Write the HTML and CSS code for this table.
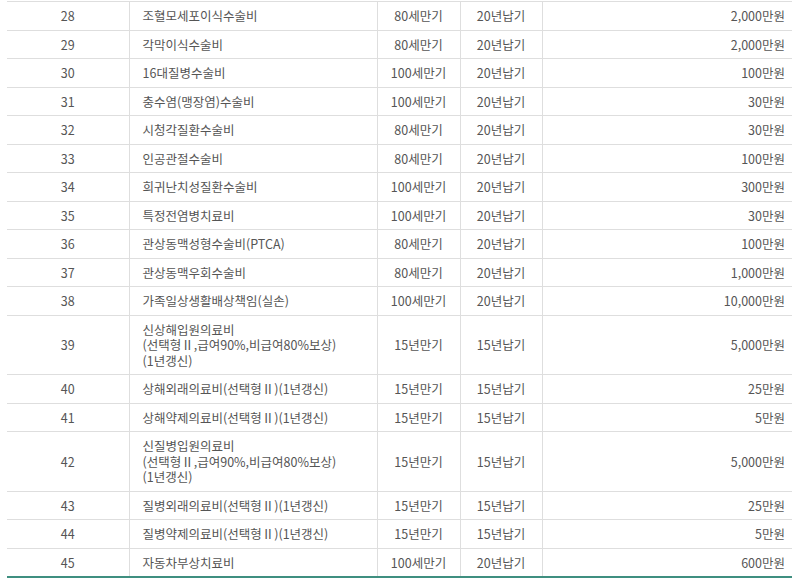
FILE: index.html
```html
<!DOCTYPE html>
<html lang="ko">
<head>
<meta charset="utf-8">
<link rel="stylesheet" href="styles.css">
</head>
<body>
<table class="tbl">
  <colgroup>
    <col class="c-no"><col class="c-name"><col class="c-term"><col class="c-pay"><col class="c-amt">
  </colgroup>
  <tbody>
    <tr><td class="no">28</td><td class="name">조혈모세포이식수술비</td><td class="ctr">80세만기</td><td class="ctr">20년납기</td><td class="amt">2,000만원</td></tr>
    <tr><td class="no">29</td><td class="name">각막이식수술비</td><td class="ctr">80세만기</td><td class="ctr">20년납기</td><td class="amt">2,000만원</td></tr>
    <tr><td class="no">30</td><td class="name">16대질병수술비</td><td class="ctr">100세만기</td><td class="ctr">20년납기</td><td class="amt">100만원</td></tr>
    <tr><td class="no">31</td><td class="name">충수염(맹장염)수술비</td><td class="ctr">100세만기</td><td class="ctr">20년납기</td><td class="amt">30만원</td></tr>
    <tr><td class="no">32</td><td class="name">시청각질환수술비</td><td class="ctr">80세만기</td><td class="ctr">20년납기</td><td class="amt">30만원</td></tr>
    <tr><td class="no">33</td><td class="name">인공관절수술비</td><td class="ctr">80세만기</td><td class="ctr">20년납기</td><td class="amt">100만원</td></tr>
    <tr><td class="no">34</td><td class="name">희귀난치성질환수술비</td><td class="ctr">100세만기</td><td class="ctr">20년납기</td><td class="amt">300만원</td></tr>
    <tr><td class="no">35</td><td class="name">특정전염병치료비</td><td class="ctr">100세만기</td><td class="ctr">20년납기</td><td class="amt">30만원</td></tr>
    <tr><td class="no">36</td><td class="name">관상동맥성형수술비(PTCA)</td><td class="ctr">80세만기</td><td class="ctr">20년납기</td><td class="amt">100만원</td></tr>
    <tr><td class="no">37</td><td class="name">관상동맥우회수술비</td><td class="ctr">80세만기</td><td class="ctr">20년납기</td><td class="amt">1,000만원</td></tr>
    <tr><td class="no">38</td><td class="name">가족일상생활배상책임(실손)</td><td class="ctr">100세만기</td><td class="ctr">20년납기</td><td class="amt">10,000만원</td></tr>
    <tr><td class="no">39</td><td class="name">신상해입원의료비<br>(선택형Ⅱ,급여90%,비급여80%보상)<br>(1년갱신)</td><td class="ctr">15년만기</td><td class="ctr">15년납기</td><td class="amt">5,000만원</td></tr>
    <tr><td class="no">40</td><td class="name">상해외래의료비(선택형Ⅱ)(1년갱신)</td><td class="ctr">15년만기</td><td class="ctr">15년납기</td><td class="amt">25만원</td></tr>
    <tr><td class="no">41</td><td class="name">상해약제의료비(선택형Ⅱ)(1년갱신)</td><td class="ctr">15년만기</td><td class="ctr">15년납기</td><td class="amt">5만원</td></tr>
    <tr><td class="no">42</td><td class="name">신질병입원의료비<br>(선택형Ⅱ,급여90%,비급여80%보상)<br>(1년갱신)</td><td class="ctr">15년만기</td><td class="ctr">15년납기</td><td class="amt">5,000만원</td></tr>
    <tr><td class="no">43</td><td class="name">질병외래의료비(선택형Ⅱ)(1년갱신)</td><td class="ctr">15년만기</td><td class="ctr">15년납기</td><td class="amt">25만원</td></tr>
    <tr><td class="no">44</td><td class="name">질병약제의료비(선택형Ⅱ)(1년갱신)</td><td class="ctr">15년만기</td><td class="ctr">15년납기</td><td class="amt">5만원</td></tr>
    <tr class="last"><td class="no">45</td><td class="name">자동차부상치료비</td><td class="ctr">100세만기</td><td class="ctr">20년납기</td><td class="amt">600만원</td></tr>
  </tbody>
</table>
</body>
</html>
```

FILE: styles.css
```css
html, body {
  margin: 0;
  padding: 0;
  background: #fff;
}
body {
  padding: 1px 8px 0 7px;
  font-family: "Noto Sans CJK KR", "Noto Sans", sans-serif;
  font-size: 12.5px;
  color: #555;
}
.tbl {
  width: 785px;
  border-collapse: collapse;
  table-layout: fixed;
  border-top: 1px solid #dedede;
  border-bottom: 2px solid #3f8f80;
}
.c-no { width: 122px; }
.c-name { width: 248px; }
.c-term { width: 83px; }
.c-pay { width: 82px; }
.c-amt { width: 250px; }
.tbl td {
  padding: 6px 0 6px;
  line-height: 15.5px;
  border-bottom: 1px solid #dedede;
  border-left: 1px solid #dedede;
  vertical-align: middle;
  white-space: nowrap;
}
.tbl td:first-child { border-left: none; }
.tbl tr.last td { border-bottom: none; }
.no, .ctr { text-align: center; }
.name { text-align: left; padding-left: 13px !important; }
.amt { text-align: right; padding-right: 7px !important; }
```
